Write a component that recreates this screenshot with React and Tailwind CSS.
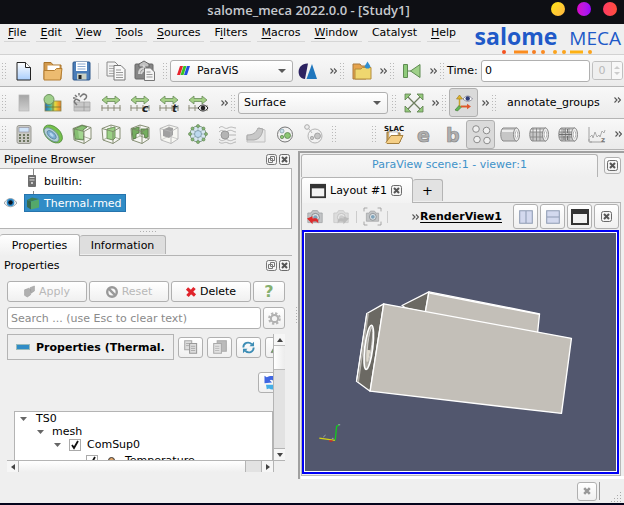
import React from "react";

/* ---------- shared pieces ---------- */

function Icon({ children, size = "size-5" }) {
  return (
    <svg viewBox="0 0 20 20" className={`${size} shrink-0 overflow-visible`} aria-hidden="true">
      {children}
    </svg>
  );
}

function Grip() {
  return (
    <svg viewBox="0 0 5 18" className="mr-[2px] h-[18px] w-[5px] shrink-0" aria-hidden="true">
      {[0, 1, 2, 3, 4, 5].map((r) => (
        <g key={r} fill="#b9b9b9">
          <rect x="0" y={r * 3 + 1} width="1" height="1" />
          <rect x="3" y={r * 3 + 1} width="1" height="1" />
        </g>
      ))}
    </svg>
  );
}

function More({ className = "w-[14px]" }) {
  return (
    <button aria-label="More" className={`flex shrink-0 items-center justify-center ${className}`}>
      <svg viewBox="0 0 7 6" className="h-[6px] w-[7px]" fill="none" stroke="#555" strokeWidth="1.1">
        <path d="M.5.5 3 3 .5 5.5M4 .5 6.500 3 4 5.500" />
      </svg>
    </button>
  );
}

function Tool({ label, pressed, children }) {
  return (
    <button
      aria-label={label}
      className={`flex h-[29px] w-[29px] shrink-0 items-center justify-center rounded-[3px] ${
        pressed ? "border border-[#b0b0b0] bg-[#dadada]" : ""
      }`}
    >
      <Icon>{children}</Icon>
    </button>
  );
}

function Toolbar({ children, className = "h-8" }) {
  return (
    <div
      className={`flex items-center overflow-hidden border-b border-[#b4b4b4] bg-linear-to-b from-[#f8f8f8] to-[#ebebeb] pl-[2px] ${className}`}
    >
      {children}
    </div>
  );
}

const control = "rounded-[3px] border border-[#b0b0b0] bg-linear-to-b from-white to-[#f0f0f0]";

function Caret() {
  return (
    <svg viewBox="0 0 8 4" className="pointer-events-none absolute right-[6px] h-1 w-2" fill="#5a5a5a" aria-hidden="true">
      <path d="M0 0h8L4 4z" />
    </svg>
  );
}

function CrossBox() {
  return (
    <svg viewBox="0 0 11 11" className="size-[11px]" aria-hidden="true">
      <rect x=".5" y=".5" width="10" height="10" rx="2" fill="#f4f4f4" stroke="#6a6a6a" />
      <path d="M3 3l5 5M8 3l-5 5" stroke="#555" strokeWidth="2" />
    </svg>
  );
}

function DockTitle({ children }) {
  return (
    <div className="flex h-[18px] items-center gap-[2px] pr-[5px] pl-1">
      <h2 className="flex-1">{children}</h2>
      <button aria-label="Float">
        <svg viewBox="0 0 11 11" className="size-[11px]" fill="none" stroke="#777">
          <rect x=".5" y=".5" width="10" height="10" rx="2" fill="#f4f4f4" />
          <path d="M4.500 2.500h4v4h-4zM2.500 4.500h4v4h-4z" />
        </svg>
      </button>
      <button aria-label={`Close ${children}`}>
        <CrossBox />
      </button>
    </div>
  );
}

/* ---------- menu and title ---------- */

const menus = [
  ["", "F", "ile"],
  ["", "E", "dit"],
  ["", "V", "iew"],
  ["", "T", "ools"],
  ["", "S", "ources"],
  ["F", "i", "lters"],
  ["", "M", "acros"],
  ["", "W", "indow"],
  ["Catalyst", "", ""],
  ["", "H", "elp"],
];

function Logo() {
  return (
    <div className="flex flex-col items-end pr-[3px] text-[#2059c8]">
      <div className="flex items-baseline gap-3 font-['Open_Sans',sans-serif] leading-6">
        <span className="text-[23px] font-bold">salome</span>
        <span className="text-[19px]">MECA</span>
      </div>
      <svg viewBox="0 0 92 4" className="mr-[29px] h-1 w-[92px]" aria-hidden="true">
        <circle cx="4" cy="2" r="2" fill="#f4511e" />
        <rect x="14" y=".5" width="14" height="3" fill="#fb8c1e" />
        <circle cx="34" cy="2" r="2" fill="#f57c20" />
        <circle cx="43" cy="2" r="2" fill="#f98a20" />
        <circle cx="55" cy="2" r="2" fill="#fba31c" />
        <circle cx="64" cy="2" r="2" fill="#fba31c" />
        <rect x="70" y=".5" width="13" height="3" fill="#fdb114" />
        <circle cx="90" cy="2" r="2" fill="#fba31c" />
      </svg>
    </div>
  );
}

function Header() {
  return (
    <header>
      <div className="grid h-6 grid-cols-[1fr_auto_1fr] items-center bg-[#0e0f14] pr-[7px]">
        <span />
        <h1 className="pb-[4px] font-['Open_Sans',sans-serif] text-[13px] leading-5 font-semibold text-[#c6c9ce]">
          salome_meca 2022.0.0 - [Study1]
        </h1>
        <div className="flex justify-end gap-3 pb-[6px]">
          <button aria-label="Minimize" className="size-[14px] rounded-full bg-linear-to-br from-[#ffe600] to-[#ffb340]" />
          <button aria-label="Maximize" className="size-[14px] rounded-full bg-linear-to-r from-[#d800c8] to-[#9a00ff]" />
          <button aria-label="Close window" className="size-[14px] rounded-full bg-linear-to-r from-[#ff3a62] to-[#ff4e3a]" />
        </div>
      </div>
      <div className="flex h-[31px] justify-between border-b border-[#d2d2d2]">
        <nav className="flex h-[18px] gap-[6px] pl-1">
          {menus.map(([a, u, b]) => (
            <button key={a + u + b} className="border-b border-[#d6d6d6] px-1 leading-[17px] whitespace-nowrap">
              {a}
              <span className="underline underline-offset-2">{u}</span>
              {b}
            </button>
          ))}
        </nav>
        <Logo />
      </div>
    </header>
  );
}

/* ---------- toolbar drawings ---------- */

const rulerTicks = "M.5 15h19M1 12v6M7 12v6M13 12v6M19 12v6";

function Rescale({ label, children }) {
  return (
    <Tool label={label}>
      <path d="M1 7l5-4v2.500h8V3l5 4-5 4V8.500H6V11z" fill="#a4cf86" stroke="#688c58" strokeWidth=".8" />
      <path d={rulerTicks} stroke="#8a8a78" fill="none" />
      {children}
    </Tool>
  );
}

function Cube({ stroke = "#7a8468", children }) {
  return (
    <g strokeWidth=".9" strokeLinejoin="round">
      <path d="M1 4.500l9-3.500 9 2.500v11.500l-7 4.500L2 16z" fill="#f6f6f2" stroke={stroke} />
      <path d="M2 16l8-4 9 3M10 1v11" fill="none" stroke={stroke} strokeWidth=".6" />
      {children}
      <path d="M1 4.500l11 3 7-4M12 7.500v12" fill="none" stroke={stroke} />
    </g>
  );
}

function Cylinder({ bands }) {
  return (
    <>
      <path d="M3 4h14v13H3c-3-2-3-11 0-13z" fill="#c6c6c6" stroke="#8a8a8a" />
      <path d="M2 7h14" stroke="#ededed" strokeWidth="2" />
      <ellipse cx="16.500" cy="10.500" rx="3" ry="6.500" fill="#ededed" stroke="#8a8a8a" />
      <ellipse cx="16.500" cy="10.500" rx="1.300" ry="3.500" fill="#fff" stroke="#999" strokeWidth=".7" />
      {bands && <path d="M4 4v13M7.500 4v13M11 4v13M1 8h13M1 13h13" stroke="#888" strokeWidth=".9" fill="none" />}
      {bands === 2 && <path d="M6 5v4M6 12v4M9.500 5v4M9.500 12v4M1 10.500h13" stroke="#666" strokeWidth=".9" fill="none" />}
    </>
  );
}

function FileToolbar() {
  return (
    <Toolbar>
      <Grip />
      <Tool label="New">
        <defs>
          <linearGradient id="page" x1="0" y1="0" x2="0" y2="1">
            <stop offset="0" stopColor="#fff" />
            <stop offset="1" stopColor="#a9cdfb" />
          </linearGradient>
        </defs>
        <path d="M3 1.500h8.500l5 5v12.500H3z" fill="url(#page)" stroke="#222" />
        <path d="M11.500 1.500v5h5" fill="#fff" stroke="#222" />
      </Tool>
      <Tool label="Open">
        <path d="M1 18V1.500h7l2 2.500h8V18z" fill="#d29a4e" stroke="#a87228" />
        <path d="M4.500 4.500h12v6h-12z" fill="#fff" />
        <path d="M1 19V9.500h10.500l2-2H19L17.500 19z" fill="#ecbb70" stroke="#b47d30" />
      </Tool>
      <Tool label="Save">
        <rect x="1" y="1" width="17" height="18" rx="1" fill="#4a7db8" stroke="#2c568a" />
        <rect x="4" y="1" width="11" height="9" fill="#fff" />
        <path d="M5.500 3h8M5.500 5.500h8M5.500 8h8" stroke="#8aa8cf" />
        <rect x="5" y="12.500" width="9.500" height="6" fill="#c9d0c4" />
        <rect x="6.500" y="14" width="3" height="4" fill="#222" />
      </Tool>
      <span className="mx-[2px] h-4 w-px bg-[#d0d0d0]" />
      <Tool label="Copy">
        <path d="M1 1h8l3 3v11H1z" fill="#f3f3f3" stroke="#8a8a8a" />
        <path d="M3 5h5M3 7.500h5M3 10h5M3 12.500h5" stroke="#aaa" />
        <path d="M8 4.500h7l4 4V19H8z" fill="#f8f8f8" stroke="#777" />
        <path d="M10 9h5M10 11.500h7M10 14h7M10 16.500h7" stroke="#999" />
      </Tool>
      <Tool label="Paste">
        <rect x="0" y="3" width="18" height="15" rx="1" fill="#858585" stroke="#666" />
        <path d="M4 3l5-3 5 3v3H4z" fill="#c0c0c0" stroke="#666" />
        <path d="M4 13c0-5 3-6 6-6l-2-3M6 13c1-3 3-4 5-4" fill="none" stroke="#d4d4d4" strokeWidth="2" />
        <path d="M9.500 7h6l4 4v8.500h-10z" fill="#f4f4f4" stroke="#777" />
        <path d="M11.500 11h4M11.500 13.500h6M11.500 16h6" stroke="#999" />
      </Tool>
      <span className="w-1 shrink-0" />
      <Grip />
      <div className={`relative flex h-[22px] w-[123px] shrink-0 items-center pl-[6px] ${control}`}>
        <svg viewBox="0 0 13 9" className="h-[9px] w-[13px] shrink-0" aria-hidden="true">
          <path d="M3 0h3L3 9H0z" fill="#e8222c" />
          <path d="M6.500 0h3l-3 9h-3z" fill="#35c424" />
          <path d="M10 0h3l-3 9H7z" fill="#2450e0" />
        </svg>
        <select aria-label="Module" className="h-full w-full appearance-none bg-transparent pl-[7px] outline-none">
          <option>ParaViS</option>
        </select>
        <Caret />
      </div>
      <Tool label="Catalyst view">
        <path d="M10 2.500C-2 2-2 18 7 18z" fill="#2c2260" />
        <path d="M14 3L19 18H8.500z" fill="#1f76bd" />
      </Tool>
      <span className="w-1 shrink-0" />
      <More />
      <Grip />
      <Tool label="Open state">
        <path d="M1 18V3h7l1.500 2H14v13z" fill="#e6a34c" stroke="#a97a3c" />
        <path d="M3 18V8h6l1.500-1.500H19V18z" fill="#efd76f" stroke="#b48c3c" />
        <path d="M15.500.5l3 5-1.500 2h-3l-1.500-2z" fill="#2f8fd0" />
      </Tool>
      <More />
      <Grip />
      <Tool label="First frame">
        <path d="M1.500 3.500h4v13h-4z" fill="#8fcb7b" stroke="#5f8c52" />
        <path d="M18 3.500v13L8.500 10z" fill="#9fd089" stroke="#5f8c52" />
        <path d="M6 10h3" stroke="#5f8c52" />
      </Tool>
      <More />
      <Grip />
      <label htmlFor="time" className="w-[34px] shrink-0">
        Time:
      </label>
      <input
        id="time"
        defaultValue="0"
        className="h-[22px] min-w-0 flex-1 rounded-[3px] border border-[#b0b0b0] bg-white px-[3px] outline-none"
      />
      <div className="mr-[1px] ml-[2px] flex h-[19px] w-[31px] shrink-0 overflow-hidden rounded-[3px] border border-[#c0c0c0] text-[#b8b8b8]">
        <input aria-label="Frame" disabled defaultValue="0" className="w-[18px] bg-[#efefef] text-center" />
        <div className="flex flex-1 flex-col items-center justify-center gap-[3px] border-l border-[#c8c8c8] bg-[#f8f8f8]">
          <button disabled aria-label="Next frame">
            <svg viewBox="0 0 6 3" className="h-[3px] w-[6px]" fill="#ccc"><path d="M0 3h6L3 0z" /></svg>
          </button>
          <button disabled aria-label="Previous frame">
            <svg viewBox="0 0 6 3" className="h-[3px] w-[6px]" fill="#ccc"><path d="M0 0h6L3 3z" /></svg>
          </button>
        </div>
      </div>
    </Toolbar>
  );
}

function ColorToolbar() {
  return (
    <Toolbar>
      <Grip />
      <Tool label="Color legend">
        <defs>
          <linearGradient id="bar" x1="0" y1="0" x2="0" y2="1">
            <stop offset="0" stopColor="#a4a4a4" />
            <stop offset="1" stopColor="#cfcfcf" />
          </linearGradient>
          <linearGradient id="rainbow">
            <stop offset="0" stopColor="#2a62b8" />
            <stop offset=".3" stopColor="#38b5b0" />
            <stop offset=".65" stopColor="#e8d43a" />
            <stop offset="1" stopColor="#e8772c" />
          </linearGradient>
        </defs>
        <rect x="5" y="2" width="10" height="16" fill="url(#bar)" stroke="#b4b4b4" strokeWidth=".7" />
      </Tool>
      <Tool label="Edit color map">
        <rect x="2" y="8" width="16" height="10" fill="url(#rainbow)" stroke="#8a8a4c" strokeWidth=".8" />
        <path d="M2 14h16M10 8v10" stroke="#77772c" strokeWidth=".8" />
        <circle cx="6" cy="6.500" r="5" fill="#9fcf8b" stroke="#6e9460" />
      </Tool>
      <Tool label="Separate color map">
        <path d="M2 9h16v9H2z" fill="#c8c8c8" stroke="#aaa" strokeWidth=".8" />
        <path d="M2 14h16M12 9v9" stroke="#999" strokeWidth=".8" />
        <path d="M5 12l-2-2c-2-2 1-5 3-3l2 1M8 4l2-2c2-2 6 0 4 3l-2 2M3 2l2 2M7 0v2.500M1 5h2.500" fill="none" stroke="#777" strokeWidth="1.500" />
      </Tool>
      <Rescale label="Rescale to data" />
      <Rescale label="Rescale to custom">
        <text x="12" y="19" className="font-['DejaVu_Sans',sans-serif] text-[11px] font-bold italic" fill="#222">c</text>
      </Rescale>
      <Rescale label="Rescale over time">
        <text x="13" y="19" className="font-['DejaVu_Sans',sans-serif] text-[11px] font-bold italic" fill="#222">t</text>
      </Rescale>
      <Rescale label="Rescale to visible">
        <path d="M10 15c3-4 7-4 10 0-3 4-7 4-10 0z" fill="#eee" stroke="#222" />
        <circle cx="15" cy="15" r="2.300" fill="#222" />
      </Rescale>
      <span className="w-[5px] shrink-0" />
      <More />
      <Grip />
      <div className={`relative flex h-[22px] w-[150px] shrink-0 items-center ${control}`}>
        <select aria-label="Representation" className="h-full w-full appearance-none bg-transparent pl-[5px] outline-none">
          <option>Surface</option>
        </select>
        <Caret />
      </div>
      <span className="w-1 shrink-0" />
      <Grip />
      <Tool label="Reset camera">
        <path d="M4 4l12 12M16 4L4 16" stroke="#6e7e5e" strokeWidth="1.300" />
        <path d="M1 1h6L1 7zM19 1v6l-6-6zM1 19v-6l6 6zM19 19h-6l6-6z" fill="#94c97c" stroke="#5d7d4e" strokeWidth=".8" />
      </Tool>
      <More />
      <Grip />
      <Tool label="Show orientation axes" pressed>
        <path d="M5.500 14V5M5.500 13.500H15" stroke="#c9a12e" strokeWidth="1.500" />
        <path d="M5.500 2l3 4h-6z" fill="#e3b62c" stroke="#9b7f2a" strokeWidth=".7" />
        <path d="M7 13.500h7" stroke="#e0562e" strokeWidth="1.700" />
        <path d="M17 13.500l-4 2.700v-5.400z" fill="#e0562e" />
        <path d="M1 17l4-4.500 2 2L3.500 18z" fill="#62b556" stroke="#477d3e" strokeWidth=".7" />
        <path d="M9 6c3-4 6.500-4 9.500 0-3 3-6.500 3-9.500 0z" fill="#fff" stroke="#778" strokeWidth=".8" />
        <circle cx="13.700" cy="5.500" r="2.200" fill="#2f3d78" />
      </Tool>
      <More />
      <Grip />
      <button className="min-w-0 flex-1 pl-2 text-left whitespace-nowrap">annotate_groups</button>
      <More className="mb-[6px] w-[14px]" />
    </Toolbar>
  );
}

function FilterToolbar() {
  return (
    <Toolbar className="h-[31px]">
      <Grip />
      <Tool label="Calculator">
        <rect x="3" y="1.500" width="14" height="18" rx="2" fill="#c9c9c4" stroke="#9a9a94" />
        <rect x="5" y="3.500" width="10" height="4.500" fill="#cfe3f8" stroke="#889" strokeWidth=".6" />
        {[10, 13, 16].map((y) => (
          <g key={y} fill="#6d7660">
            <rect x="5" y={y} width="2" height="2" />
            <rect x="9" y={y} width="2" height="2" />
            <rect x="13" y={y} width="2" height="2" />
          </g>
        ))}
      </Tool>
      <Tool label="Contour">
        <g transform="rotate(42 10 10)">
          <ellipse cx="10" cy="10" rx="11" ry="7" fill="#76c14c" stroke="#4f8a3a" strokeWidth=".8" />
          <ellipse cx="9.500" cy="11.500" rx="9" ry="4.800" fill="#b4d0d8" stroke="#6f8f95" strokeWidth=".8" />
          <ellipse cx="9.500" cy="11.500" rx="5.500" ry="2.800" fill="#7fb0d4" stroke="#54809c" strokeWidth=".8" />
          <ellipse cx="9.500" cy="11.500" rx="2.500" ry="1.200" fill="#b8d8ef" />
        </g>
      </Tool>
      <Tool label="Clip">
        <Cube><path d="M2 5l8-3.500 5 1.500-4 3 .5 10L3 15z" fill="#86bf72" stroke="#5f7f4e" /><path d="M6 6l5 1v8l-4-1z" fill="#a3d690" /></Cube>
      </Tool>
      <Tool label="Slice">
        <Cube><path d="M6 5l8-2v11l-2 2-6-1.500z" fill="#9bd186" stroke="#6a8c58" /></Cube>
      </Tool>
      <Tool label="Threshold">
        <Cube><path d="M2 5l7-2v6l-3 1v4l-3 1zM11 5h7v8l-3 1-1-4h-3z" fill="#74ae5e" stroke="#5a7a48" /></Cube>
      </Tool>
      <Tool label="Extract subset">
        <Cube stroke="#b4b4b4"><path d="M4 5.500l6-2.500 4 1v7l-4 3-6-2z" fill="#a0a0a0" /></Cube>
      </Tool>
      <Tool label="Glyph">
        <circle cx="10" cy="10" r="8" fill="#d6e6f0" stroke="#7d9680" strokeWidth=".9" />
        <path d="M2 10h16M10 2v16M4 5l12 10M16 5L4 15" stroke="#8fa8b0" strokeWidth=".7" />
        <circle cx="10" cy="10" r="3.500" fill="#bcd8ee" stroke="#7793a0" strokeWidth=".8" />
        <g fill="#86b976" stroke="#5d7d4e" strokeWidth=".6">
          <circle cx="10" cy="2" r="1.500" /><circle cx="10" cy="18" r="1.500" />
          <circle cx="2" cy="10" r="1.500" /><circle cx="18" cy="10" r="1.500" />
          <circle cx="4.500" cy="4.500" r="1.500" /><circle cx="15.500" cy="4.500" r="1.500" />
          <circle cx="4.500" cy="15.500" r="1.500" /><circle cx="15.500" cy="15.500" r="1.500" />
        </g>
      </Tool>
      <Tool label="Stream tracer">
        <path d="M2 4c4-4 5 2 9 0s5 0 8 0M2 8c4-4 5 1 9-1s5 1 8 1M2 15c4 4 5-1 9 1s5-1 8-1M2 18c4 3 5-1 9 1s5-1 8-1M13 11h6" fill="none" stroke="#b4b4b4" />
        <circle cx="8" cy="11" r="4" fill="#b4b4b4" stroke="#999" />
      </Tool>
      <Tool label="Warp">
        <path d="M1 12c8 1 11-3 12-8l6 2v12H1z" fill="#e8e8e8" stroke="#c0c0c0" />
        <path d="M1 11c6 0 9-2 11-7l5 1c-1 6-3 10-9 11H1z" fill="#c8c8c8" stroke="#a8a8a8" />
      </Tool>
      <Tool label="Group datasets">
        <circle cx="10" cy="10.500" r="7.500" fill="#f2f2f2" stroke="#777" />
        <circle cx="7" cy="7" r="2" fill="#cfe4ee" stroke="#7793a0" strokeWidth=".7" />
        <circle cx="12.500" cy="11.500" r="3" fill="#8cc774" stroke="#5d8350" strokeWidth=".8" />
        <circle cx="7" cy="13" r="1.700" fill="#8cc774" stroke="#5d8350" strokeWidth=".7" />
      </Tool>
      <Tool label="Extract group">
        <circle cx="11" cy="12" r="7" fill="#f2f2f2" stroke="#b4b4b4" />
        <circle cx="3" cy="3" r="2.300" fill="#eee" stroke="#aaa" />
        <path d="M5 5l3 4" stroke="#bbb" />
        <circle cx="13.500" cy="12" r="3" fill="#c4c4c4" stroke="#999" strokeWidth=".8" />
        <circle cx="8" cy="14" r="1.700" fill="#c4c4c4" stroke="#999" strokeWidth=".7" />
      </Tool>
      <span className="w-1 shrink-0" />
      <Grip />
      <span className="w-[33px] shrink-0" />
      <Grip />
      <Tool label="Load SLAC data">
        <path d="M3 18V8h5l1 1h7v9z" fill="#e4b45c" stroke="#8f6f38" />
        <path d="M5 8h9v7H5z" fill="#fff" stroke="#999" strokeWidth=".6" />
        <path d="M2 18.500l5-7h12l-4 8H3z" fill="#f5cf86" stroke="#a5803f" />
        <text x="0" y="7" className="font-['DejaVu_Sans',sans-serif] text-[7px] font-bold" fill="#111">SLAC</text>
      </Tool>
      <Tool label="Electric field">
        <text x="4" y="18" className="font-['DejaVu_Sans',sans-serif] text-[19px] font-bold" fill="#b0b0b0" stroke="#868686" strokeWidth=".7">e</text>
      </Tool>
      <Tool label="Magnetic field">
        <text x="4" y="18" className="font-['DejaVu_Sans',sans-serif] text-[19px] font-bold" fill="#b0b0b0" stroke="#868686" strokeWidth=".7">b</text>
      </Tool>
      <Tool label="Show particles" pressed>
        <g fill="#f0f0f0" stroke="#8c8c8c">
          <circle cx="5" cy="5" r="3.300" /><circle cx="15.500" cy="6.500" r="3.300" />
          <circle cx="6" cy="15.500" r="3.300" /><circle cx="16" cy="16.500" r="3.300" />
        </g>
      </Tool>
      <Tool label="Solid mesh"><Cylinder /></Tool>
      <Tool label="Wireframe solid"><Cylinder bands={1} /></Tool>
      <Tool label="Wireframe and back"><Cylinder bands={2} /></Tool>
      <Tool label="Plot over Z">
        <path d="M2 3v15h16M1 16h2M4 17v2" fill="none" stroke="#a0a0a0" />
        <path d="M3 13l2-2 1 3 2-6 2 5 2-2 1 2 2-6 2 2 1-3" fill="none" stroke="#a4a4a4" strokeWidth=".9" />
        <text x="14" y="18" className="font-['DejaVu_Sans',sans-serif] text-[7px] font-bold" fill="#777">z</text>
      </Tool>
      <span className="flex-1" />
      <More />
    </Toolbar>
  );
}

/* ---------- left dock ---------- */

function PipelineBrowser() {
  return (
    <section>
      <DockTitle>Pipeline Browser</DockTitle>
      <ul className="mr-[3px] h-[61px] border border-l-0 border-[#b4b4b4] bg-white">
        <li className="flex h-[24px] items-center pl-7">
          <svg viewBox="0 0 8 20" className="mr-2 h-5 w-2 overflow-visible" aria-hidden="true">
            <path d="M5.500-2v7M5.500 20v4" stroke="#888" />
            <rect x="0" y="4" width="8" height="12" rx="1" fill="#6e6e6e" />
            <path d="M1.500 6.500h5M1.500 9h5" stroke="#d8d8d8" />
            <rect x="3" y="11" width="2" height="2" fill="#ccc" />
          </svg>
          builtin:
        </li>
        <li className="flex h-[20px] items-center pl-1">
          <svg viewBox="0 0 13 10" className="mr-[7px] h-[10px] w-[13px]" aria-label="Visible">
            <path d="M0 5c4-6 9-6 13 0-4 5-9 5-13 0z" fill="#eee" stroke="#8a9299" strokeWidth=".8" />
            <circle cx="6.500" cy="4.500" r="3.800" fill="#2b8acb" />
            <circle cx="6.500" cy="4.500" r="2.200" fill="#0b1520" />
          </svg>
          <span className="flex h-[18px] items-center border border-[#2674ad] bg-[#308cc6] pr-[3px] pl-px text-white">
            <svg viewBox="0 0 14 14" className="mr-1 size-[14px]" aria-hidden="true">
              <path d="M1 4l5-2.500 7 1.500-8 2.500z" fill="#3e8053" />
              <path d="M1 4l4 1.500v8L1 11z" fill="#376b50" />
              <path d="M5 5.500l8-2v8l-8 2z" fill="#54a869" />
            </svg>
            Thermal.rmed
          </span>
        </li>
      </ul>
    </section>
  );
}

function PropertiesHeader() {
  const small = `flex h-[21px] w-[25px] shrink-0 items-center justify-center ${control}`;
  return (
    <div className="flex items-center gap-1">
      <button className="flex h-[26px] w-[167px] shrink-0 items-center gap-[6px] overflow-hidden border border-[#b4b4b4] pl-2 font-bold whitespace-nowrap">
        <span className="h-[6px] w-[14px] shrink-0 border border-[#9bb] bg-[#308cc6]" />
        Properties (Thermal.
      </button>
      <button aria-label="Copy properties" className={small}>
        <Icon size="size-[14px]">
          <path d="M1 1h10v13H1z" fill="#ddd" stroke="#aaa" strokeWidth="1.500" />
          <path d="M8 5h10v14H8z" fill="#ddd" stroke="#999" strokeWidth="1.500" />
          <path d="M3 5h5M3 8h4M10 9h6M10 12h6M10 15h6" stroke="#999" />
        </Icon>
      </button>
      <button aria-label="Paste properties" className={small}>
        <Icon size="size-[14px]">
          <path d="M6 1h13v15H6z" fill="#bbb" stroke="#aaa" strokeWidth="1.500" />
          <path d="M1 5h11v14H1z" fill="#e2e2e2" stroke="#aaa" strokeWidth="1.500" />
          <path d="M3 9h6M3 12h6M3 15h6" stroke="#aaa" />
        </Icon>
      </button>
      <button aria-label="Reset to defaults" className={small}>
        <Icon size="size-[13px]">
          <path d="M2 10c0-7 8-10 13-5M18 10c0 7-8 10-13 5" fill="none" stroke="#3d8db5" strokeWidth="2.800" />
          <path d="M18.500 1v7h-7zM1.500 19v-7h7z" fill="#3d8db5" />
        </Icon>
      </button>
      <button aria-label="Save as defaults" className={`${small} justify-start pl-[5px]`}>
        <Icon size="size-[14px]"><path d="M0 18l4-7v7zM4 6l9-4v8z" fill="#72b05c" stroke="#777" /></Icon>
      </button>
    </div>
  );
}

function TreeArrow() {
  return (
    <svg viewBox="0 0 7 4" className="h-1 w-[7px] shrink-0" fill="#666" aria-hidden="true"><path d="M0 0h7L3.500 4z" /></svg>
  );
}

function Check({ id }) {
  return (
    <span className="relative size-3 shrink-0">
      <input id={id} type="checkbox" defaultChecked className="block size-3 appearance-none border border-[#aaa] bg-white" />
      <svg viewBox="0 0 12 12" className="pointer-events-none absolute inset-0 size-3" fill="none" stroke="#111" strokeWidth="1.800" aria-hidden="true">
        <path d="M3 6l2 3 4-7" />
      </svg>
    </span>
  );
}

function PropertyArea() {
  const step = "flex shrink-0 items-center justify-center bg-[#f6f6f6]";
  return (
    <div className="mt-[5px] mr-[10px] ml-[7px] grid grid-cols-[minmax(0,1fr)_12px] grid-rows-[126px_12px]">
      <div className="flex flex-col overflow-hidden">
        <PropertiesHeader />
        <button aria-label="Reload" className={`mt-3 -mr-[10px] flex h-[21px] w-[25px] shrink-0 items-center self-end pl-1 ${control}`}>
          <Icon size="size-[15px]">
            <path d="M2 1l3 2c5-3 10-2 13 1l-4 4c-2-2-4-2-5-1l3 3-10 1z" fill="#3f66e2" />
            <path d="M4 13h11c3-2 2-5 1-7l4 2v8c-4 4-9 4-12 2l-3 1z" fill="#45aee6" />
          </Icon>
        </button>
        <div className="mt-[18px] ml-[7px] h-20 shrink-0 border border-[#b4b4b4] bg-white">
          <div className="flex h-[13px] items-center gap-[9px] pl-[5px]"><TreeArrow />TS0</div>
          <div className="flex h-[13px] items-center gap-[8px] pl-[22px]"><TreeArrow />mesh</div>
          <div className="flex h-[13px] items-center pl-[39px]">
            <TreeArrow />
            <span className="w-2" />
            <Check id="comsup" />
            <label htmlFor="comsup" className="pl-[6px]">ComSup0</label>
          </div>
          <div className="flex h-[19px] items-center pl-[71px]">
            <Check id="temperature" />
            <span className="mr-[10px] ml-[10px] size-[7px] rounded-full border border-[#333] bg-[#e0a468]" />
            <label htmlFor="temperature">Temperature</label>
          </div>
        </div>
      </div>
      <div className="flex flex-col border-l border-[#b4b4b4] bg-[#e2e2e2]" aria-hidden="true">
        <span className={`${step} h-[11px]`}>
          <svg viewBox="0 0 6 4" className="h-1 w-[6px]" fill="#444"><path d="M0 4h6L3 0z" /></svg>
        </span>
        <span className="h-[25px] border-y border-[#bcbcbc] bg-linear-to-r from-white to-[#ececec]" />
        <span className="flex-1" />
        <span className={`${step} h-3 border-t border-[#b4b4b4]`}>
          <svg viewBox="0 0 6 4" className="h-1 w-[6px]" fill="#444"><path d="M0 0h6L3 4z" /></svg>
        </span>
      </div>
      <div className="flex border-t border-[#b4b4b4] bg-[#e2e2e2]" aria-hidden="true">
        <span className={`${step} w-3 border-r border-[#b4b4b4]`}>
          <svg viewBox="0 0 4 6" className="h-[6px] w-1" fill="#444"><path d="M4 0v6L0 3z" /></svg>
        </span>
        <span className="flex-1 border-r border-[#b4b4b4] bg-linear-to-b from-white to-[#efefef]" />
        <span className="w-[15px]" />
        <span className={`${step} w-3 border-l border-[#b4b4b4]`}>
          <svg viewBox="0 0 4 6" className="h-[6px] w-1" fill="#444"><path d="M0 0v6l4-3z" /></svg>
        </span>
      </div>
      <div className="border-t border-l border-[#b4b4b4]" />
    </div>
  );
}

function PropertiesDock() {
  const action = `flex h-[21px] items-center justify-center gap-1 ${control}`;
  return (
    <section>
      <div className="flex h-[22px] items-end">
        <button className="h-[22px] w-[80px] rounded-t-[3px] border border-b-0 border-l-0 border-[#b4b4b4] bg-linear-to-b from-white to-[#efefef]">
          Properties
        </button>
        <div className="mr-[3px] flex h-full flex-1 items-end border-b border-[#b4b4b4] pb-px">
          <button className="h-[19px] w-[86px] rounded-t-[3px] border border-b-0 border-l-0 border-[#b4b4b4] bg-[#dedede]">
            Information
          </button>
        </div>
      </div>
      <DockTitle>Properties</DockTitle>
      <div className="mt-[7px] mr-[10px] ml-[7px] grid grid-cols-[1fr_1fr_1fr_32px] gap-[2px]">
        <button disabled className={`${action} text-[#b8b8b8]`}>
          <Icon size="size-[11px]">
            <path d="M1 7l8-3 3 3v9l-6 4-5-3zM11 3l8-3v9l-6 4z" fill="#b0b0b0" stroke="#999" />
          </Icon>
          Apply
        </button>
        <button disabled className={`${action} text-[#b8b8b8]`}>
          <Icon size="size-3">
            <circle cx="10" cy="10" r="8" fill="none" stroke="#999" strokeWidth="4" />
            <path d="M4 4l12 12" stroke="#999" strokeWidth="4" />
          </Icon>
          Reset
        </button>
        <button className={action}>
          <Icon size="size-[10px]"><path d="M2 3l16 14M17 2L3 18" stroke="#e0242c" strokeWidth="6.500" /></Icon>
          Delete
        </button>
        <button aria-label="Help" className={`${action} text-[16px] leading-none font-bold text-[#85b070]`}>?</button>
      </div>
      <div className="mt-[5px] mr-[10px] ml-[7px] flex items-center gap-[2px]">
        <input
          aria-label="Search"
          placeholder="Search ... (use Esc to clear text)"
          className="h-[22px] min-w-0 flex-1 rounded-[3px] border border-[#b0b0b0] bg-white px-[3px] outline-none placeholder:text-[#8a8a8a]"
        />
        <button aria-label="Advanced" className={`flex size-[22px] items-center justify-center ${control}`}>
          <Icon size="size-[13px]">
            <circle cx="10" cy="10" r="8" fill="none" stroke="#b4b4b4" strokeWidth="3.500" strokeDasharray="3.500 2.780" />
            <circle cx="10" cy="10" r="5.500" fill="#f4f4f4" stroke="#b0b0b0" strokeWidth="3" />
          </Icon>
        </button>
      </div>
      <PropertyArea />
    </section>
  );
}

/* ---------- viewer ---------- */

function Scene() {
  return (
    <svg viewBox="0 0 312 238" className="min-h-0 w-full flex-1 basis-0" role="img" aria-label="Thermal.rmed">
      <g transform="translate(-9 37) scale(.3333)" strokeLinejoin="round" stroke="#fff" strokeWidth="4">
        <path d="M319 106l81-41-11 62-60-14z" fill="#6b6963" />
        <path d="M400 65l333 66-6 58-338-62z" fill="#c3bfb8" />
        <path d="M402 69l331 64" strokeWidth="4" />
        <path d="M213 130l51-29-41 263-41-30z" fill="#6b6963" />
        <path d="M217 130l-30 206" stroke="#b3b0aa" strokeWidth="5" />
        <path d="M213 130l-31 204" strokeWidth="3" />
        <path d="M264 101l565 104-30 226-576-67z" fill="#c3bfb8" />
        <g transform="rotate(7 219 232)">
          <ellipse cx="219" cy="232" rx="12" ry="67" fill="#aeaba4" strokeWidth="5" />
          <ellipse cx="221" cy="222" rx="6" ry="50" fill="#77746e" strokeWidth="2" stroke="#eee" />
          <path d="M214 240h11l-3 35h-5z" fill="#ded9cd" stroke="none" />
        </g>
      </g>
      <g transform="translate(-9 37) scale(.3333)" fill="none" strokeWidth="4">
        <path d="M118 512l4-42 8-5" stroke="#14c820" />
        <path d="M70 505l47 7" stroke="#d2cf18" />
        <path d="M100 514h10" stroke="#d62020" />
        <path d="M82 502l7-6M108 506h5M127 465h6" stroke="#aab0b8" strokeWidth="2.500" />
      </g>
    </svg>
  );
}

function Camera({ muted, children }) {
  return (
    <>
      <path d="M1 5h4l2-3h6l2 3h4v12H1z" fill={muted ? "#dcdcdc" : "#c2c4c6"} stroke={muted ? "#c8c8c8" : "#a0a2a4"} />
      <circle cx="10.500" cy="10.500" r="5" fill={muted ? "#e8e8e8" : "#dfe4e7"} stroke={muted ? "#bbb" : "#787c80"} />
      <circle cx="10.500" cy="10.500" r="2.800" fill={muted ? "#ccc" : "#7fa3ba"} />
      {children}
    </>
  );
}

function WindowGlyph({ size }) {
  return (
    <svg viewBox="0 0 18 18" className={size} aria-hidden="true">
      <path d="M0 1h18v16H0z" fill="#333" />
      <path d="M2 6h14v9H2z" fill="#f2f2f2" />
    </svg>
  );
}

function Viewer() {
  const viewButton = `flex size-[25px] shrink-0 items-center justify-center ${control}`;
  return (
    <section className="mt-px flex min-w-0 flex-1 flex-col border-t-2 border-l-2 border-[#a0a0a0] pl-px">
      <div className="flex h-6 items-end gap-[6px] pr-[3px]">
        <h2 className="flex h-[23px] flex-1 items-center justify-center rounded-t-[3px] border border-b-0 border-[#b4b4b4] bg-linear-to-b from-[#f8f8f8] to-[#efefef] pb-[3px] text-[#3e92c9]">
          ParaView scene:1 - viewer:1
        </h2>
        <button aria-label="Close viewer" className={`mb-[3px] flex size-[17px] items-center justify-center ${control}`}>
          <CrossBox />
        </button>
      </div>
      <div className="flex h-[26px] items-end">
        <div className="flex h-[26px] w-[112px] shrink-0 items-center gap-1 rounded-t-[3px] border border-b-0 border-[#b4b4b4] bg-linear-to-b from-white to-[#f2f2f2] pl-2 whitespace-nowrap">
          <WindowGlyph size="size-4 shrink-0" />
          Layout #1
          <button aria-label="Close layout"><CrossBox /></button>
        </div>
        <div className="mr-[3px] flex h-[25px] flex-1 items-end border-b border-[#b4b4b4] pb-px">
          <button aria-label="New layout" className="h-[22px] w-[30px] rounded-t-[3px] border border-b-0 border-l-0 border-[#b4b4b4] bg-[#e2e2e2] text-[13px]">
            +
          </button>
        </div>
      </div>
      <div className="mr-[3px] flex flex-1 flex-col border border-t-0 border-[#b8b8b8] pr-px">
        <div className="flex h-[27px] items-center pl-[5px]">
          <button aria-label="Camera undo" className="w-[26px]">
            <Icon size="size-4"><Camera><path d="M0 14l7-3v3c4-1 8-1 7 6-2-3-4-3-7-2v3z" fill="#dc2b2b" transform="translate(0 -2)" /></Camera></Icon>
          </button>
          <button aria-label="Camera redo" className="w-[23px]">
            <Icon size="size-4"><Camera muted><path d="M20 14l-7-3v3c-4-1-8-1-7 6 2-3 4-3 7-2v3z" fill="#bbb" transform="translate(0 -2)" /></Camera></Icon>
          </button>
          <span className="mr-[7px] h-3 w-px bg-[#ccc]" />
          <button aria-label="Screenshot" className="w-[23px]">
            <Icon size="size-[17px]">
              <path d="M0 4V0h4M16 0h4v4M20 16v4h-4M4 20H0v-4" fill="none" stroke="#999" />
              <g transform="translate(2 2) scale(.8)"><Camera /></g>
            </Icon>
          </button>
          <span className="h-3 w-px bg-[#ccc]" />
          <span className="flex-1" />
          <More className="h-3 w-2" />
          <a href="#view" className="mr-[11px] pl-px font-bold underline underline-offset-2">RenderView1</a>
          <div className="flex gap-[2px]">
            <button aria-label="Split horizontally" className={viewButton}>
              <Icon size="size-[14px]"><path d="M1 1h18v18H1zM10 1v18" fill="#d3d9ee" stroke="#8f9cb4" strokeWidth="1.500" /></Icon>
            </button>
            <button aria-label="Split vertically" className={viewButton}>
              <Icon size="size-[14px]"><path d="M1 1h18v18H1zM1 10h18" fill="#d3d9ee" stroke="#8f9cb4" strokeWidth="1.500" /></Icon>
            </button>
            <button aria-label="Maximize view" className={viewButton}><WindowGlyph size="size-[18px]" /></button>
            <button aria-label="Close view" className={viewButton}><CrossBox /></button>
          </div>
        </div>
        <div id="view" className="flex flex-1 flex-col border-2 border-[#0000f5] bg-white p-px">
          <div className="flex flex-1 flex-col bg-[#52576e]">
            <Scene />
          </div>
        </div>
        <div className="h-px" />
      </div>
      <div className="h-[3px] bg-white" />
    </section>
  );
}

/* ---------- window ---------- */

export default function App() {
  return (
    <div className="flex min-h-screen flex-col bg-[#efefef] font-['DejaVu_Sans',sans-serif] text-[11px] leading-[13px] text-black">
      <Header />
      <FileToolbar />
      <ColorToolbar />
      <FilterToolbar />
      <main className="flex flex-1">
        <div className="w-[295px] shrink-0">
          <PipelineBrowser />
          <div className="flex h-[5px] items-center justify-center gap-[2px]" aria-hidden="true">
            {[0, 1, 2, 3, 4, 5].map((i) => (
              <span key={i} className="size-px bg-[#b0b0b0]" />
            ))}
          </div>
          <PropertiesDock />
        </div>
        <span className="flex w-[3px] shrink-0 flex-col items-center justify-center gap-[2px]" aria-hidden="true">
          {[0, 1, 2, 3, 4, 5].map((i) => (
            <span key={i} className="size-px bg-[#b0b0b0]" />
          ))}
        </span>
        <Viewer />
      </main>
      <footer className="flex h-[26px] items-center justify-end gap-[2px] border-b-2 border-[#04041c]">
        <button aria-label="Abort" className={`flex h-[19px] w-5 items-center justify-center ${control}`}>
          <Icon size="size-2"><path d="M3 3l14 14M17 3L3 17" stroke="#999" strokeWidth="6.500" /></Icon>
        </button>
        <span className="h-[18px] w-px bg-[#999]" />
        <svg viewBox="0 0 12 12" className="mr-[2px] ml-2 size-3 self-end" fill="#aaa" aria-hidden="true">
          <path d="M10 1h1v1h-1zM7 4h1v1H7zM10 4h1v1h-1zM4 7h1v1H4zM7 7h1v1H7zM10 7h1v1h-1zM1 10h1v1H1zM4 10h1v1H4zM7 10h1v1H7zM10 10h1v1h-1z" />
        </svg>
      </footer>
    </div>
  );
}
